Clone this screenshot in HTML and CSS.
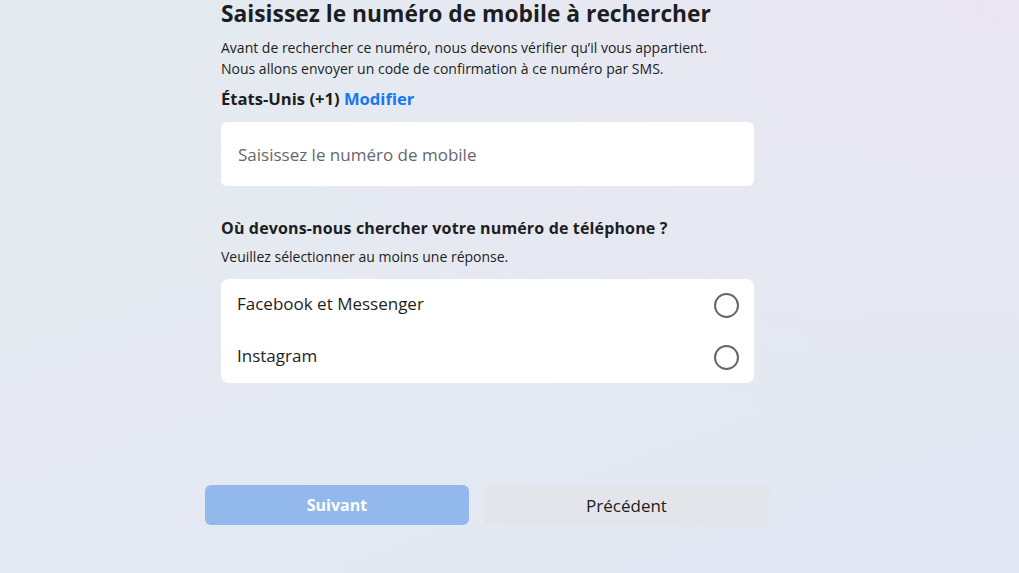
FILE: index.html
```html
<!DOCTYPE html>
<html lang="fr">
<head>
<meta charset="utf-8">
<title>Rechercher un numéro</title>
<link rel="stylesheet" href="styles.css">
</head>
<body>
<div class="page">
  <div class="content">
    <h1 class="title">Saisissez le numéro de mobile à rechercher</h1>
    <p class="intro">Avant de rechercher ce numéro, nous devons vérifier qu’il vous appartient.<br>Nous allons envoyer un code de confirmation à ce numéro par SMS.</p>
    <div class="country">États-Unis (+1) <a class="link" href="#">Modifier</a></div>
    <div class="field"><span class="placeholder">Saisissez le numéro de mobile</span></div>
    <h2 class="question">Où devons-nous chercher votre numéro de téléphone ?</h2>
    <p class="hint">Veuillez sélectionner au moins une réponse.</p>
    <div class="options">
      <div class="option"><span class="option-label">Facebook et Messenger</span><span class="radio"></span></div>
      <div class="option"><span class="option-label">Instagram</span><span class="radio"></span></div>
    </div>
  </div>
  <div class="actions">
    <button class="btn btn-primary">Suivant</button>
    <button class="btn btn-secondary">Précédent</button>
  </div>
</div>
</body>
</html>
```
FILE: styles.css
```css
html, body {
  margin: 0;
  height: 100%;
}
body {
  font-family: "Open Sans", "Noto Sans", sans-serif;
  color: #1c1e21;
  background: linear-gradient(160deg, #e3ebef 0%, #e6e9f1 45%, #e1e8f4 100%);
  position: relative;
  overflow: hidden;
}
body::before {
  content: "";
  position: absolute;
  inset: 0;
  background: radial-gradient(ellipse at 100% 0%, rgba(234, 230, 243, 0.9) 0%, rgba(234, 230, 243, 0) 55%);
  pointer-events: none;
}
.page {
  position: relative;
  width: 565px;
  margin-left: 205px;
}
.content {
  padding: 0 16px;
}
.title {
  margin: 0;
  font-size: 22.8px;
  line-height: 28px;
  font-weight: 700;
  color: #1c1e21;
}
.intro {
  margin: 9px 0 0;
  font-size: 14px;
  line-height: 21px;
  color: #1c1e21;
}
.country {
  margin-top: 10px;
  font-size: 16.6px;
  line-height: 20px;
  font-weight: 700;
}
.link {
  color: #1877f2;
  text-decoration: none;
}
.field {
  margin-top: 13px;
  height: 64px;
  background: #fff;
  border-radius: 6px;
  display: flex;
  align-items: center;
  padding: 0 17px;
}
.placeholder {
  font-size: 17px;
  font-weight: 500;
  color: #65676b;
}
.question {
  margin: 32px 0 0;
  font-size: 16px;
  line-height: 20px;
  font-weight: 700;
  letter-spacing: 0.15px;
}
.hint {
  margin: 10px 0 0;
  font-size: 14px;
  line-height: 18px;
}
.options {
  margin-top: 13px;
  background: #fff;
  border-radius: 8px;
}
.option {
  height: 52px;
  display: flex;
  align-items: center;
  justify-content: space-between;
  padding: 0 16px;
  font-size: 17px;
  font-weight: 500;
}
.option-label {
  line-height: 20px;
  margin-top: -3px;
}
.radio {
  width: 21px;
  height: 21px;
  border: 2px solid #606770;
  border-radius: 50%;
  margin-right: -1px;
}
.actions {
  margin-top: 102px;
  display: grid;
  grid-template-columns: 264px 1fr;
  gap: 14px;
}
.btn {
  height: 40px;
  border: 0;
  border-radius: 6px;
  font-family: inherit;
  font-size: 16px;
}
.btn-primary {
  background: #93b9ec;
  color: #fff;
  font-weight: 700;
}
.btn-secondary {
  background: #e3e5ea;
  color: #1c1e21;
  font-size: 17px;
  font-weight: 500;
}
```
